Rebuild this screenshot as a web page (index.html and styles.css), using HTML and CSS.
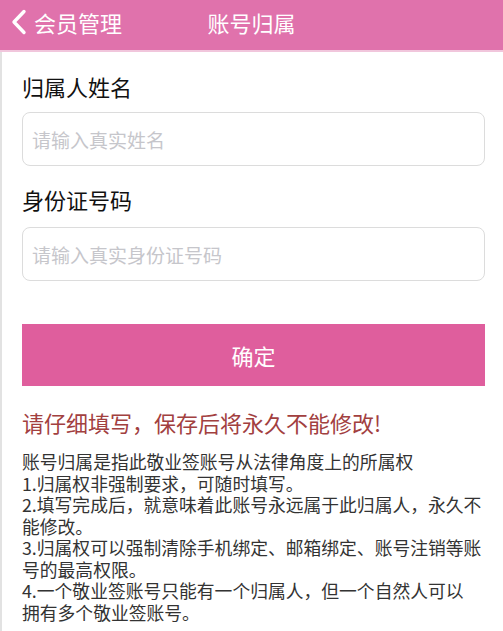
FILE: index.html
```html
<!DOCTYPE html>
<html lang="zh-CN">
<head>
    <meta charset="UTF-8">
    <meta name="viewport" content="width=device-width, initial-scale=1.0">
    <title>账号归属</title>
    <link rel="stylesheet" href="styles.css">
</head>
<body>

    <header class="top-bar">
        <a class="back" href="#">
            <svg class="back-icon" width="18" height="26" viewBox="0 0 18 26">
                <path d="M14 2.5 L4 13 L14 23.5" fill="none" stroke="#fff" stroke-width="3.4" stroke-linecap="round" stroke-linejoin="round"/>
            </svg>
            <span>会员管理</span>
        </a>
        <h1 class="title">账号归属</h1>
        <span></span>
    </header>

    <main class="page">
        <label class="field-label" for="owner-name">归属人姓名</label>
        <input class="field" id="owner-name" type="text" placeholder="请输入真实姓名">

        <label class="field-label second" for="owner-id">身份证号码</label>
        <input class="field" id="owner-id" type="text" placeholder="请输入真实身份证号码">

        <button class="submit">确定</button>

        <p class="warning">请仔细填写，保存后将永久不能修改!</p>

        <div class="notes">
            <p>账号归属是指此敬业签账号从法律角度上的所属权</p>
            <p>1.归属权非强制要求，可随时填写。</p>
            <p>2.填写完成后，就意味着此账号永远属于此归属人，永久不能修改。</p>
            <p>3.归属权可以强制清除手机绑定、邮箱绑定、账号注销等账号的最高权限。</p>
            <p>4.一个敬业签账号只能有一个归属人，但一个自然人可以<br>拥有多个敬业签账号。</p>
        </div>
    </main>

</body>
</html>
```

FILE: styles.css
```css
/* Reset */
* {
    margin: 0;
    padding: 0;
    box-sizing: border-box;
}

body {
    font-family: "Noto Sans CJK SC", "Noto Sans", sans-serif;
    background: #fff;
    color: #111;
    width: 503px;
    min-height: 631px;
}

/* Barra superior */
.top-bar {
    display: grid;
    grid-template-columns: 1fr auto 1fr;
    align-items: center;
    height: 52px;
    padding-bottom: 6px;
    background: #e072ac;
    border-bottom: 2px solid #f1c6dc;
    color: #fff;
}

.back {
    display: flex;
    align-items: center;
    gap: 6px;
    padding-left: 10px;
    color: #fff;
    text-decoration: none;
    font-size: 22px;
}

.back-icon {
    display: block;
}

.title {
    font-size: 22px;
    font-weight: normal;
    line-height: 30px;
}

/* Conteúdo */
.page {
    display: flex;
    flex-direction: column;
    border-left: 2px solid #e2e2e2;
    padding: 19px 18px 20px 20px;
    min-height: 579px;
}

.field-label {
    font-size: 22px;
    line-height: 30px;
    color: #111;
}

.field-label.second {
    margin-top: 18px;
}

.field {
    margin-top: 11px;
    height: 54px;
    border: 1px solid #dcdcdc;
    border-radius: 8px;
    padding: 0 9px;
    font-family: inherit;
    font-size: 19px;
    color: #333;
    outline: none;
}

#owner-id {
    margin-top: 13px;
}

.field::placeholder {
    color: #c6c6cb;
}

.submit {
    margin-top: 43px;
    height: 62px;
    border: none;
    background: #df5e9d;
    color: #fff;
    font-family: inherit;
    font-size: 22px;
    cursor: pointer;
}

.warning {
    margin-top: 21px;
    font-size: 22px;
    line-height: 30px;
    color: #a2403f;
}

.notes {
    margin-top: 14px;
    font-size: 17.8px;
    line-height: 21.5px;
    color: #333;
}
```
